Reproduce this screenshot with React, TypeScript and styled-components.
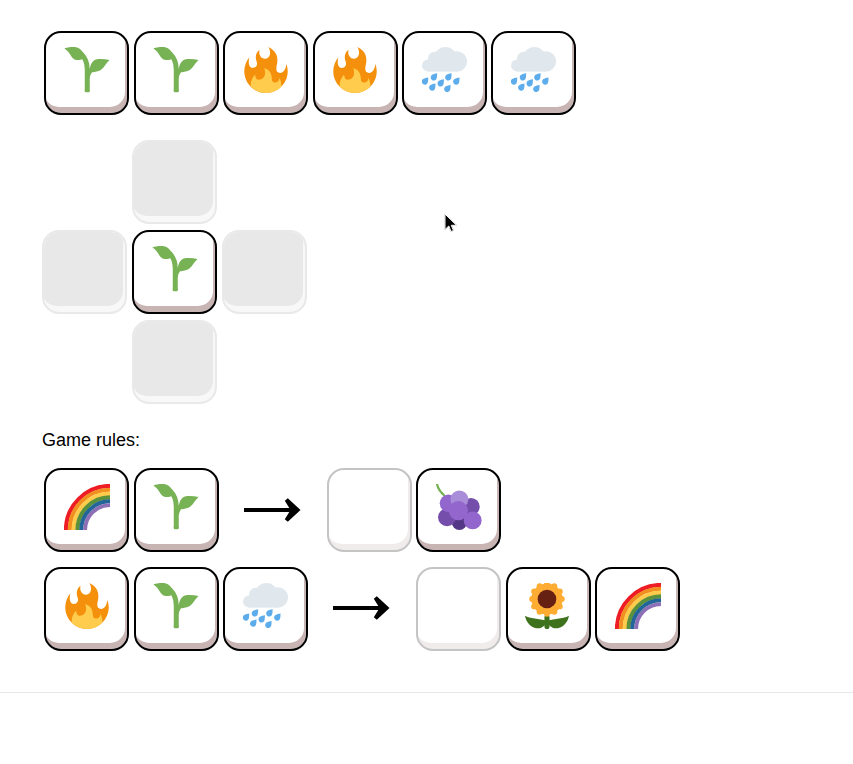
import React from 'react'
import styled, { createGlobalStyle, css } from 'styled-components'

type Emoji = 'sprout' | 'fire' | 'rain' | 'rainbow' | 'grapes' | 'sunflower'
type Look = 'solid' | 'empty' | 'faded'

const GlobalStyle = createGlobalStyle`
  html, body {
    margin: 0;
    padding: 0;
    background: #fff;
    font-family: "Liberation Sans", Arial, sans-serif;
  }
`

const Page = styled.div`
  position: relative;
  height: 764px;
  overflow: hidden;
`

const Game = styled.main`
  display: flex;
  flex-direction: column;
  align-items: flex-start;
  padding: 31px 0 41px 42px;
`

const Row = styled.div`
  display: flex;
  gap: 4.45px;
  padding-left: 2.3px;
`

const Board = styled.div`
  display: grid;
  grid-template-columns: repeat(3, 85px);
  grid-auto-rows: 84px;
  column-gap: 5px;
  row-gap: 6px;
  margin-top: 25px;
`

const BoardCell = styled.div<{ $col: number; $row: number }>`
  grid-column: ${({ $col }) => $col};
  grid-row: ${({ $row }) => $row};
`

const looks = {
  solid: css`
    border-color: #000;
    box-shadow: inset -2px -6px 0 #c9b4b4;
  `,
  empty: css`
    border-color: #c4c4c4;
    box-shadow: inset -2px -6px 0 #efeceb;
  `,
  faded: css`
    border-color: #e9e9e9;
    box-shadow: inset -2px -6px 0 #f9f8f8, inset 0 0 0 100px #e8e8e8;
  `,
}

const Tile = styled.div<{ $look: Look }>`
  box-sizing: border-box;
  width: 85px;
  height: 84px;
  display: flex;
  align-items: center;
  justify-content: center;
  padding-bottom: 6px;
  background: #fff;
  border: 2px solid;
  border-radius: 17px;
  ${({ $look }) => looks[$look]}
`

const Glyph = styled.svg`
  display: block;
  width: 46px;
  height: 46px;
`

const Title = styled.p`
  margin: 26px 0 0;
  font-size: 18px;
  line-height: 21px;
  color: #000;
`

const Rules = styled.div`
  display: flex;
  flex-direction: column;
  gap: 15px;
  margin-top: 17px;
`

const ArrowCell = styled.div<{ $lift: number }>`
  width: 99.1px;
  display: flex;
  align-items: center;
  justify-content: center;
  padding-bottom: ${({ $lift }) => $lift}px;
`

const ArrowGlyph = styled.svg`
  display: block;
  width: 60px;
  height: 24px;
`

const Divider = styled.hr`
  margin: 0;
  border: 0;
  border-top: 1px solid #e5e7eb;
`

const Pointer = styled.svg`
  position: absolute;
  left: 443px;
  top: 212px;
  width: 16px;
  height: 23px;
  filter: drop-shadow(0.5px 0.5px 0.6px rgba(0, 0, 0, 0.45));
`

const Drop = ({ x, y }: { x: number; y: number }) => (
  <path
    transform={`translate(${x} ${y})`}
    fill="#5DADEC"
    d="M2.800-3.200C2.600-1.200 2.900-.2 2.200 1.200A2.400 2.400 0 1 1-1.200-2C.2-2.800 1.200-2.900 2.800-3.200Z"
  />
)

const petals = Array.from({ length: 12 }, (_, i) => (i * Math.PI) / 6)

const art: Record<Emoji, React.ReactNode> = {
  sprout: (
    <>
      <path fill="#77B255" d="M.3 1.100C3 .2 7-.4 10.200.4c2.600.7 4.300 2.800 5.800 6 .3 2-1.400 3.600-3.800 3.800C9.600 10.500 7.600 9.800 6.200 8 4.700 5.700 3.300 2.800.3 1.100Z" />
      <path fill="none" stroke="#77B255" strokeWidth="3.900" d="M13.500 5.500C17 9 18.200 13 18.200 17.500V34.500" />
      <path fill="#77B255" d="M16.250 33.500h3.900v1.200q0 .8-.8.8h-2.300q-.8 0-.8-.8Z" />
      <path fill="none" stroke="#77B255" strokeWidth="3.200" d="M18.500 24C19.500 19.500 21.500 16.500 25 14" />
      <path fill="#77B255" d="M35.700 10.200C32 9.300 28 9 25 9.700c-3 1-4.800 4.300-5 9.600 3 .9 7.200.1 9.500-1.800 2.300-2 3.600-5.300 6.200-7.300Z" />
    </>
  ),
  fire: (
    <>
      <path
        fill="#F4900C"
        d="M35 19c0-2.062-.367-4.039-1.040-5.868-.46 5.389-3.333 8.157-6.335 6.868-2.812-1.208-.917-5.917-.777-8.164.236-3.809-.012-8.169-6.931-11.794 2.875 5.500.333 8.917-2.333 9.125-2.958.231-5.667-2.542-4.667-7.042-3.238 2.386-3.332 6.402-2.333 9 1.042 2.708-.042 4.958-2.583 5.208-2.840.28-4.418-3.041-2.963-8.333C2.520 10.965 1 14.805 1 19c0 9.389 7.611 17 17 17s17-7.611 17-17z"
      />
      <path
        fill="#FFCC4D"
        d="M28.394 23.999c.148 3.084-2.561 4.293-4.019 3.709-2.106-.843-1.541-2.291-2.083-5.291s-2.625-5.083-5.708-6c2.250 6.333-1.247 8.667-3.080 9.084-1.872.426-3.753-.001-3.968-4.007C7.352 23.668 6 26.676 6 30c0 .34.019.675.049 1.008C9.086 34.107 13.305 36 18 36s8.914-1.893 11.951-4.992c.03-.333.049-.668.049-1.008 0-2.200-.6-4.300-1.606-6.001z"
      />
    </>
  ),
  rain: (
    <>
      <g fill="#E1E8ED">
        <circle cx="4.800" cy="14.500" r="4.800" />
        <circle cx="9.900" cy="9" r="5.200" />
        <circle cx="18.300" cy="9" r="9" />
        <circle cx="27.300" cy="11.300" r="8" />
        <rect x="4.800" y="10" width="22.500" height="9.300" />
      </g>
      <Drop x={2.1} y={27.1} />
      <Drop x={9.1} y={23.8} />
      <Drop x={20.400} y={23.8} />
      <Drop x={14.400} y={28.500} />
      <Drop x={26.600} y={27.1} />
      <Drop x={7.8} y={31.8} />
      <Drop x={19.600} y={32.900} />
    </>
  ),
  rainbow: (
    <g fill="none" strokeWidth="3.200">
      <path stroke="#EE1C25" d="M1.500 36A34.500 34.500 0 0 1 36 1.500" />
      <path stroke="#F19020" d="M4.500 36A31.500 31.500 0 0 1 36 4.500" />
      <path stroke="#FFCB4C" d="M7.500 36A28.500 28.500 0 0 1 36 7.500" />
      <path stroke="#5C913B" d="M10.500 36A25.500 25.500 0 0 1 36 10.500" />
      <path stroke="#226699" d="M13.500 36A22.500 22.500 0 0 1 36 13.500" />
      <path stroke="#8C6FB5" strokeWidth="3" d="M16.500 36A19.500 19.500 0 0 1 36 16.500" />
    </g>
  ),
  grapes: (
    <>
      <path fill="none" stroke="#77B255" strokeWidth="1.800" strokeLinecap="round" d="M.9.6C1.600 3.600 3.700 6.500 6.500 9" />
      <circle cx="18.300" cy="30" r="6" fill="#553788" />
      <circle cx="27.400" cy="17.700" r="6.800" fill="#744EAA" />
      <circle cx="8.600" cy="26" r="7" fill="#744EAA" />
      <circle cx="9.700" cy="15.100" r="6.800" fill="#9266CC" />
      <circle cx="18.300" cy="12" r="7" fill="#AA8DD8" />
      <circle cx="28.700" cy="28.500" r="7" fill="#9266CC" />
      <circle cx="17.500" cy="20.900" r="7.500" fill="#9266CC" />
    </>
  ),
  sunflower: (
    <>
      <path fill="#3E721D" d="M0 25.600C1 31.500 5.500 35.500 10.500 35.500c3 0 5.600-2.500 6.700-5.500C13 27.500 5 28.500 0 25.600Z" />
      <path fill="#3E721D" d="M34.400 25.600C33.400 31.500 28.900 35.500 23.900 35.500c-3 0-5.600-2.500-6.700-5.500 4.200-2.500 12.200-1.500 17.200-4.400Z" />
      <rect x="15.200" y="25" width="4" height="11" rx="2" fill="#3E721D" />
      <circle cx="17.200" cy="12.500" r="12.200" fill="#FFAC33" />
      {petals.map((a) => (
        <circle key={a} cx={17.2 + 11.6 * Math.cos(a)} cy={12.5 + 11.6 * Math.sin(a)} r="2.300" fill="#FFAC33" />
      ))}
      <circle cx="17.200" cy="12.500" r="7.300" fill="#662113" />
    </>
  ),
}

const Card = ({ icon, look = 'solid' }: { icon?: Emoji; look?: Look }) => (
  <Tile $look={look}>
    {icon && <Glyph viewBox="0 0 36 36">{art[icon]}</Glyph>}
  </Tile>
)

const Arrow = ({ lift }: { lift: number }) => (
  <ArrowCell $lift={lift}>
    <ArrowGlyph viewBox="0 0 60 24">
      <rect x="1" y="10" width="50" height="4" fill="#000" />
      <path fill="#000" d="M44.800.3L41.800 2.700L47.500 12L41.800 21.300L44.800 23.700L57.500 12Z" />
    </ArrowGlyph>
  </ArrowCell>
)

const hand: Emoji[] = ['sprout', 'sprout', 'fire', 'fire', 'rain', 'rain']

export default function App() {
  return (
    <Page>
      <GlobalStyle />
      <Game>
        <Row>
          {hand.map((icon, i) => (
            <Card key={i} icon={icon} />
          ))}
        </Row>
        <Board>
          <BoardCell $col={2} $row={1}><Card look="faded" /></BoardCell>
          <BoardCell $col={1} $row={2}><Card look="faded" /></BoardCell>
          <BoardCell $col={2} $row={2}><Card icon="sprout" /></BoardCell>
          <BoardCell $col={3} $row={2}><Card look="faded" /></BoardCell>
          <BoardCell $col={2} $row={3}><Card look="faded" /></BoardCell>
        </Board>
        <Title>Game rules:</Title>
        <Rules>
          <Row>
            <Card icon="rainbow" />
            <Card icon="sprout" />
            <Arrow lift={0} />
            <Card look="empty" />
            <Card icon="grapes" />
          </Row>
          <Row>
            <Card icon="fire" />
            <Card icon="sprout" />
            <Card icon="rain" />
            <Arrow lift={3} />
            <Card look="empty" />
            <Card icon="sunflower" />
            <Card icon="rainbow" />
          </Row>
        </Rules>
      </Game>
      <Divider />
      <Pointer viewBox="0 0 16 23">
        <path fill="#000" stroke="#fff" strokeWidth="1" d="M2 2V17.500L5.800 14L8 19.500L10.500 18.500L8.300 13.300H13.500Z" />
      </Pointer>
    </Page>
  )
}
